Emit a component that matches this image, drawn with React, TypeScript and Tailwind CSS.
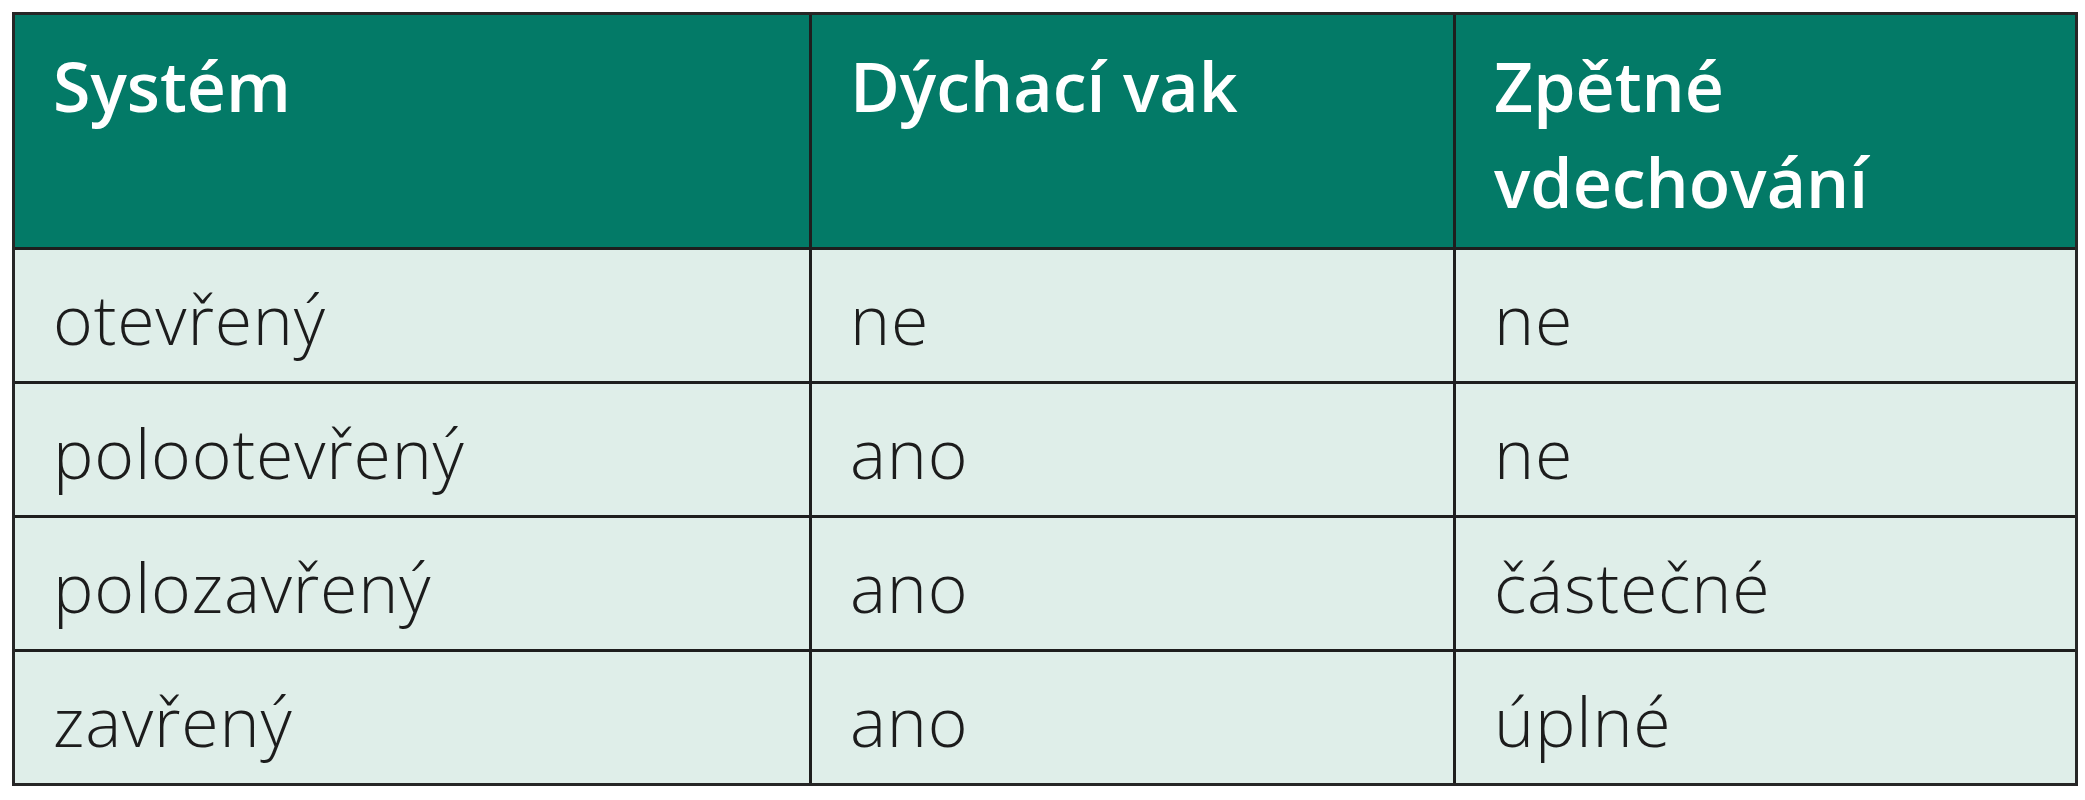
import React from "react";

const header = ["Systém", "Dýchací vak", "Zpětné vdechování"];
const rows = [
  ["otevřený", "ne", "ne"],
  ["polootevřený", "ano", "ne"],
  ["polozavřený", "ano", "částečné"],
  ["zavřený", "ano", "úplné"],
];

export default function App() {
  return (
    <div className="w-[2085px] h-[800px] bg-white pt-[12px] pl-[12px]" style={{ fontFamily: '"Open Sans", "Noto Sans", sans-serif' }}>
      <div className="grid w-[2066px] grid-cols-[794px_641px_619px] gap-[3px] border-[3px] border-[#262626] bg-[#1e1e1e]">
        {header.map((h, i) => (
          <div key={i} className="bg-[#037a67] pl-[38px] pr-[30px] pt-[23px] pb-[17px] text-[68px] leading-[96px] font-semibold text-white">
            {i === 2 ? (
              <>
                Zpětné
                <br />
                vdechování
              </>
            ) : (
              h
            )}
          </div>
        ))}
        {rows.map((r, ri) =>
          r.map((c, ci) => (
            <div key={ri + "-" + ci} className="bg-[#dfeee9] pl-[38px] pt-[21px] pb-[14px] text-[68px] leading-[96px] font-light tracking-[0.8px] text-[#1c1c1c]">
              {c}
            </div>
          ))
        )}
      </div>
    </div>
  );
}
